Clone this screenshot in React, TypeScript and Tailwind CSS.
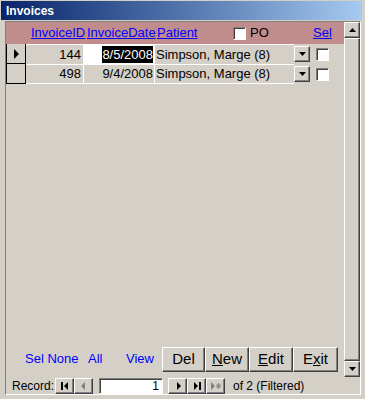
import React from "react";

const raised =
  "border border-t-white border-l-white border-r-[#404040] border-b-[#404040] shadow-[inset_-1px_-1px_0_#808080]";
const sunken =
  "border border-t-[#808080] border-l-[#808080] border-r-white border-b-white shadow-[inset_1px_1px_0_#404040]";

const rows = [
  { id: 144, date: "8/5/2008", patient: "Simpson, Marge (8)", current: true },
  { id: 498, date: "9/4/2008", patient: "Simpson, Marge (8)", current: false },
];

function CheckBox() {
  return <div className={`h-[13px] w-[13px] shrink-0 bg-white ${sunken}`} />;
}

function Arrow({ dir, muted }: { dir: "up" | "down"; muted?: boolean }) {
  const pts = dir === "up" ? "0,4 7,4 3.5,0" : "0,0 7,0 3.5,4";
  return (
    <svg width="7" height="4" viewBox="0 0 7 4">
      <polygon points={pts} fill={muted ? "#808080" : "#000"} />
    </svg>
  );
}

function NavButton({ kind, muted }: { kind: "first" | "prev" | "next" | "last" | "new"; muted?: boolean }) {
  const c = muted ? "#808080" : "#000";
  return (
    <div className={`flex h-[16px] w-[19px] shrink-0 items-center justify-center bg-[#D4D0C8] ${raised}`}>
      <svg width="10" height="8" viewBox="0 0 10 8">
        {kind === "first" && (
          <>
            <rect x="1" y="0" width="2" height="8" fill={c} />
            <polygon points="8,0 8,8 4,4" fill={c} />
          </>
        )}
        {kind === "prev" && <polygon points="6,0 6,8 2,4" fill={c} />}
        {kind === "next" && <polygon points="4,0 4,8 8,4" fill={c} />}
        {kind === "last" && (
          <>
            <polygon points="2,0 2,8 6,4" fill={c} />
            <rect x="7" y="0" width="2" height="8" fill={c} />
          </>
        )}
        {kind === "new" && (
          <>
            <polygon points="0,0 0,8 4,4" fill={c} />
            <path d="M7.5 1v6M5 4h5M5.7 2.2l3.6 3.6M9.3 2.2L5.7 5.8" stroke={c} strokeWidth="1" />
          </>
        )}
      </svg>
    </div>
  );
}

function FormButton({ children, w }: { children: React.ReactNode; w: string }) {
  return (
    <div className={`flex h-[25px] shrink-0 items-center justify-center bg-[#D4D0C8] text-[15px] text-black ${raised} ${w}`}>
      {children}
    </div>
  );
}

export default function App() {
  return (
    <div className="flex h-[399px] w-[365px] flex-col bg-[#D4D0C8] pl-[1px] pr-[3px] pt-[1px] font-['Liberation_Sans',Arial,sans-serif] text-[13px] text-black">
      <div className="flex h-[19px] shrink-0 items-center bg-linear-to-r from-[#0A246A] to-[#A6CAF0] pl-[5px] text-[12px] font-bold text-white">
        Invoices
      </div>

      <div className="ml-[4px] mr-[1px] mt-[1px] flex h-[374px] flex-col border border-t-[#808080] border-l-[#808080] border-r-white border-b-white">
        <div className="flex h-[355px]">
          <div className="flex flex-1 flex-col">
            {/* header */}
            <div className="flex h-[22px] shrink-0 items-center bg-[#C08C8C] text-[#0000FF]">
              <span className="w-[19px] shrink-0" />
              <span className="w-[59px] shrink-0 whitespace-nowrap pl-[6px] underline">InvoiceID</span>
              <span className="w-[71px] shrink-0 whitespace-nowrap pl-[3px] underline">InvoiceDate</span>
              <div className="flex w-[155px] shrink-0 items-center">
                <span className="w-[78px] shrink-0 whitespace-nowrap pl-[2px] underline">Patient</span>
                <CheckBox />
                <span className="ml-[4px] text-black">PO</span>
              </div>
              <span className="whitespace-nowrap pl-[3px] underline">Sel</span>
            </div>

            {/* detail */}
            <div className="flex-1">
              {rows.map((r, i) => (
                <div key={r.id} className="flex h-[20px] items-stretch">
                  <div
                    className={`flex w-[20px] shrink-0 items-center justify-center border-x border-b border-black ${i === 0 ? "border-t-white" : ""}`}
                  >
                    {r.current && (
                      <svg width="6" height="10" viewBox="0 0 6 10" className="ml-[1px]">
                        <polygon points="0,0 0,10 5,5" fill="#000" />
                      </svg>
                    )}
                  </div>
                  <div
                    className={`flex w-[58px] shrink-0 items-center justify-end border-r border-t border-white pr-[2px] ${i === 1 ? "border-b" : ""}`}
                  >
                    {r.id}
                  </div>
                  <div
                    className={`flex w-[71px] shrink-0 items-center justify-end border-r border-t border-white pr-[1px] ${i === 1 ? "border-b" : ""} ${r.current ? "bg-white" : ""}`}
                  >
                    {r.current ? (
                      <span className="bg-black leading-[17px] text-white">{r.date}</span>
                    ) : (
                      r.date
                    )}
                  </div>
                  <div
                    className={`flex w-[139px] shrink-0 items-center whitespace-nowrap border-t border-white pl-[1px] ${i === 1 ? "border-b" : ""}`}
                  >
                    {r.patient}
                  </div>
                  <div className="flex w-[16px] shrink-0 items-center">
                    <div className={`flex h-[16px] w-[16px] items-center justify-center bg-[#D4D0C8] ${raised}`}>
                      <Arrow dir="down" />
                    </div>
                  </div>
                  <div className="ml-[6px] flex items-center">
                    <CheckBox />
                  </div>
                </div>
              ))}
            </div>

            {/* footer */}
            <div className="flex h-[36px] shrink-0 items-center pl-[19px] text-[#0000FF]">
              <span className="w-[63px] shrink-0 whitespace-nowrap">Sel None</span>
              <span className="w-[38px] shrink-0">All</span>
              <span className="w-[36px] shrink-0">View</span>
              <FormButton w="w-[43px]">Del</FormButton>
              <FormButton w="w-[44px]">
                <span className="underline">N</span>ew
              </FormButton>
              <FormButton w="w-[44px]">
                <span className="underline">E</span>dit
              </FormButton>
              <FormButton w="w-[45px]">
                E<span className="underline">x</span>it
              </FormButton>
            </div>
          </div>

          {/* scrollbar */}
          <div className="flex w-[16px] shrink-0 flex-col">
            <div className={`flex h-[16px] shrink-0 items-center justify-center ${raised}`}>
              <Arrow dir="up" />
            </div>
            <div className={`flex-1 ${raised}`} />
            <div className={`flex h-[16px] shrink-0 items-center justify-center ${raised}`}>
              <Arrow dir="down" />
            </div>
          </div>
        </div>

        {/* record navigator */}
        <div className="flex h-[17px] shrink-0 items-center pl-[6px] text-[12px]">
          <span className="w-[43px] shrink-0">Record:</span>
          <NavButton kind="first" />
          <NavButton kind="prev" muted />
          <div className={`ml-[6px] flex h-[16px] w-[64px] shrink-0 items-center justify-end bg-white pr-[3px] ${sunken}`}>
            1
          </div>
          <div className="ml-[5px] flex">
            <NavButton kind="next" />
            <NavButton kind="last" />
            <NavButton kind="new" muted />
          </div>
          <span className="ml-[8px] whitespace-pre">of 2 (Filtered)</span>
        </div>
      </div>
    </div>
  );
}
